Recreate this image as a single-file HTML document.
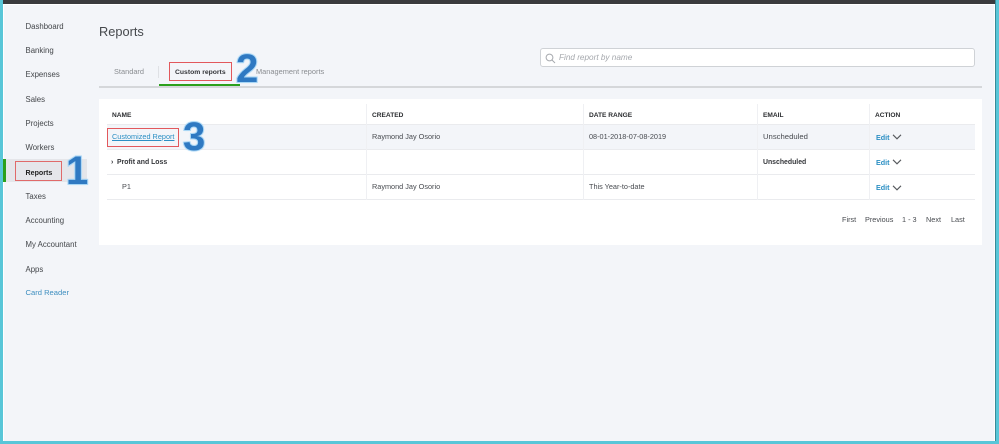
<!DOCTYPE html>
<html><head><meta charset="utf-8"><style>
html,body{margin:0;padding:0;width:999px;height:444px;overflow:hidden;background:#f3f5f9}
*{box-sizing:border-box}
#p{position:absolute;left:0;top:0;width:999px;height:444px;font-family:"Liberation Sans",sans-serif;color:#444;filter:blur(.35px)}
.a{position:absolute}
.t{position:absolute;white-space:nowrap;font-size:7.3px;line-height:10px;color:#484b50}
.n{font-size:7.8px;left:25.5px;color:#43464a}
.h{font-weight:bold;font-size:6.6px;color:#2b2d30}
.b{font-weight:bold;color:#34363a;font-size:6.9px}
.e{font-weight:bold;color:#2b8fc4;left:876px;font-size:7.2px}
.num{position:absolute;font-family:"Liberation Sans",sans-serif;font-weight:bold;color:#2f79c2;line-height:1;-webkit-text-stroke:2px #a9d6f5;paint-order:stroke fill;text-shadow:0 0 2px #a9d6f5}
</style></head><body><div id="p">
<div class="a" style="left:0;top:0;width:999px;height:4px;background:#3a3b3e"></div>
<div class="a" style="left:3px;top:4px;width:992px;height:437px;border:1.5px solid #fff;border-bottom:0"></div>
<div class="a" style="left:0;top:0;width:3px;height:444px;background:#58c6d8"></div>
<div class="a" style="left:994.5px;top:0;width:4.5px;height:444px;background:#58c6d8"></div>
<div class="a" style="left:994.5px;top:0;width:1px;height:444px;background:#3a8a98"></div>
<div class="a" style="left:0;top:441px;width:999px;height:3px;background:#58c6d8"></div>

<div class="a" style="left:3px;top:159px;width:84px;height:23px;background:#e5e6ea"></div>
<div class="a" style="left:3px;top:159px;width:3px;height:23px;background:#2ca01c"></div>
<div class="a" style="left:15px;top:161px;width:47px;height:20px;border:1px solid #e06a6a"></div>

<div class="t n" style="top:22px">Dashboard</div>
<div class="t n" style="top:46px">Banking</div>
<div class="t n" style="top:70px">Expenses</div>
<div class="t n" style="top:95px">Sales</div>
<div class="t n" style="top:119px">Projects</div>
<div class="t n" style="top:143px">Workers</div>
<div class="t n b" style="top:168px;color:#222;font-size:7.1px">Reports</div>
<div class="t n" style="top:192px">Taxes</div>
<div class="t n" style="top:216px">Accounting</div>
<div class="t n" style="top:240px">My Accountant</div>
<div class="t n" style="top:265px">Apps</div>
<div class="t n" style="top:288px;color:#3f8fc0;font-size:7.6px">Card Reader</div>

<div class="t" style="left:99px;top:24px;font-size:12.8px;line-height:16px;color:#45484c">Reports</div>

<div class="t" style="left:114px;top:67px;font-size:7.4px;color:#8a8d91">Standard</div>
<div class="a" style="left:158px;top:66px;width:1px;height:12px;background:#dfe1e5"></div>
<div class="t b" style="left:175px;top:68px;font-size:6.8px">Custom reports</div>
<div class="t" style="left:256px;top:67px;font-size:7.4px;color:#8a8d91">Management reports</div>
<div class="a" style="left:99px;top:85.5px;width:883px;height:2px;background:#d5d7da"></div>
<div class="a" style="left:159px;top:84px;width:81px;height:2px;background:#2ca01c"></div>
<div class="a" style="left:169px;top:62px;width:63px;height:19px;border:1px solid #e2585c"></div>

<div class="a" style="left:540px;top:48px;width:435px;height:19px;background:#fff;border:1px solid #cfd2d6;border-radius:3px"></div>
<svg class="a" style="left:545px;top:53px" width="11" height="11" viewBox="0 0 11 11" fill="none" stroke="#a6a9ae" stroke-width="1"><circle cx="4.5" cy="4.5" r="3.4"/><path d="M7 7l3 3"/></svg>
<div class="t" style="left:559px;top:52.5px;font-size:8.2px;font-style:italic;color:#a5a8ad">Find report by name</div>

<div class="a" style="left:99px;top:99px;width:883px;height:146px;background:#fff"></div>
<div class="a" style="left:107px;top:124px;width:868px;height:25px;background:#f3f5f9"></div>
<div class="a" style="left:107px;top:124px;width:868px;height:1px;background:#eaebee"></div>
<div class="a" style="left:107px;top:149px;width:868px;height:1px;background:#eaebee"></div>
<div class="a" style="left:107px;top:174px;width:868px;height:1px;background:#eaebee"></div>
<div class="a" style="left:107px;top:199px;width:868px;height:1px;background:#eaebee"></div>
<div class="a" style="left:366px;top:104px;width:1px;height:96px;background:#eff0f3"></div>
<div class="a" style="left:583px;top:104px;width:1px;height:96px;background:#eff0f3"></div>
<div class="a" style="left:756.5px;top:104px;width:1px;height:96px;background:#eff0f3"></div>
<div class="a" style="left:869px;top:104px;width:1px;height:96px;background:#eff0f3"></div>

<div class="t h" style="left:112px;top:111px">NAME</div>
<div class="t h" style="left:372px;top:111px">CREATED</div>
<div class="t h" style="left:589px;top:111px">DATE RANGE</div>
<div class="t h" style="left:763px;top:111px">EMAIL</div>
<div class="t h" style="left:875px;top:111px">ACTION</div>

<div class="a" style="left:107px;top:127.5px;width:72px;height:19px;border:1px solid #e2585c"></div>
<div class="t" style="left:112px;top:132px;color:#2b8fc4;text-decoration:underline">Customized Report</div>
<div class="t" style="left:372px;top:132px">Raymond Jay Osorio</div>
<div class="t" style="left:589px;top:132px">08-01-2018-07-08-2019</div>
<div class="t" style="left:763px;top:132px;font-size:7.7px">Unscheduled</div>
<div class="t e" style="top:133px">Edit</div>

<div class="t b" style="left:111px;top:158px">›</div>
<div class="t b" style="left:117px;top:158px">Profit and Loss</div>
<div class="t b" style="left:763px;top:158px">Unscheduled</div>
<div class="t e" style="top:158px">Edit</div>

<div class="t" style="left:122px;top:182px">P1</div>
<div class="t" style="left:372px;top:182px">Raymond Jay Osorio</div>
<div class="t" style="left:589px;top:182px">This Year-to-date</div>
<div class="t e" style="top:183px">Edit</div>

<svg class="a" style="left:892px;top:134px" width="10" height="6" viewBox="0 0 10 6" fill="none" stroke="#55585c" stroke-width="1.1"><path d="M1 .8l4 4 4-4"/></svg>
<svg class="a" style="left:892px;top:159px" width="10" height="6" viewBox="0 0 10 6" fill="none" stroke="#55585c" stroke-width="1.1"><path d="M1 .8l4 4 4-4"/></svg>
<svg class="a" style="left:892px;top:185px" width="10" height="6" viewBox="0 0 10 6" fill="none" stroke="#55585c" stroke-width="1.1"><path d="M1 .8l4 4 4-4"/></svg>

<div class="t" style="left:842px;top:215px">First</div>
<div class="t" style="left:865px;top:215px">Previous</div>
<div class="t" style="left:902px;top:215px">1 - 3</div>
<div class="t" style="left:926px;top:215px">Next</div>
<div class="t" style="left:951px;top:215px">Last</div>

<div class="num" style="left:66px;top:151px;font-size:40px">1</div>
<div class="num" style="left:236px;top:49px;font-size:40px">2</div>
<div class="num" style="left:183px;top:117px;font-size:40px">3</div>
</div></body></html>
